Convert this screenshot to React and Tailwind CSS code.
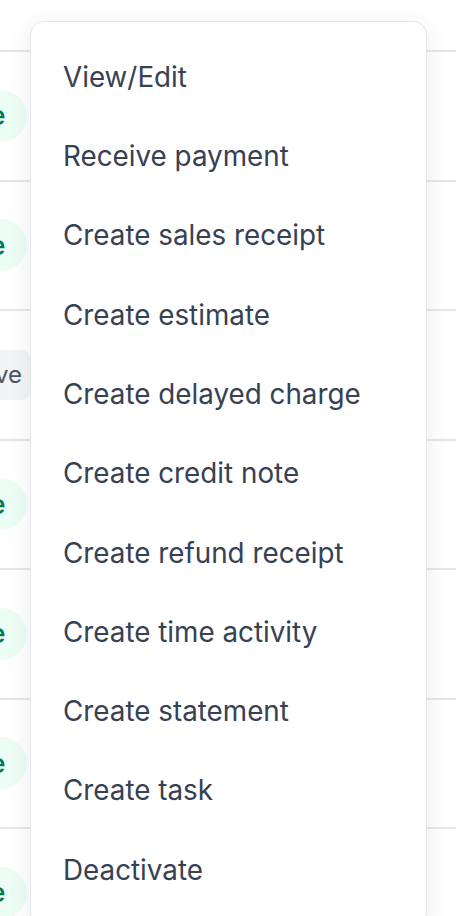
import React from "react";

const items = [
  "View/Edit",
  "Receive payment",
  "Create sales receipt",
  "Create estimate",
  "Create delayed charge",
  "Create credit note",
  "Create refund receipt",
  "Create time activity",
  "Create statement",
  "Create task",
  "Deactivate",
];

const rows = ["active", "active", "inactive", "active", "active", "active", "active"];

function Pill({ status }) {
  if (status === "inactive") {
    return (
      <span className="flex h-[50px] w-[30px] items-center justify-end rounded-r-lg bg-gray-100 pr-[8px] text-[24px] text-gray-600">
        ve
      </span>
    );
  }
  return (
    <span className="flex h-[52px] w-[27px] items-center rounded-r-full bg-emerald-50 text-[26px] font-semibold text-emerald-700">
      <span className="-ml-[10px]">e</span>
    </span>
  );
}

export default function App() {
  return (
    <div
      className="relative h-[916px] w-full overflow-hidden bg-white"
      style={{ fontFamily: "Inter, 'Noto Sans', sans-serif" }}
    >
      {/* table behind the menu */}
      <div className="flex flex-col">
        <div className="flex h-[52px] items-end border-b-2 border-gray-200 pb-[43px]">
          <span className="ml-[190px] text-[24px] text-gray-300">Created · Status</span>
        </div>
        {rows.map((s, i) => (
          <div key={i} className="flex h-[129.5px] items-center border-b-2 border-gray-200">
            <Pill status={s} />
          </div>
        ))}
      </div>

      {/* dropdown menu */}
      <div className="absolute left-[30px] top-[21px] w-[397px] rounded-[14px] border border-gray-200 bg-white py-4 shadow-[0_4px_24px_rgba(0,0,0,0.08)]">
        {items.map((label) => (
          <div key={label} className="flex h-[79.3px] items-center px-8 text-[27.8px] text-gray-700">
            {label}
          </div>
        ))}
      </div>
    </div>
  );
}
